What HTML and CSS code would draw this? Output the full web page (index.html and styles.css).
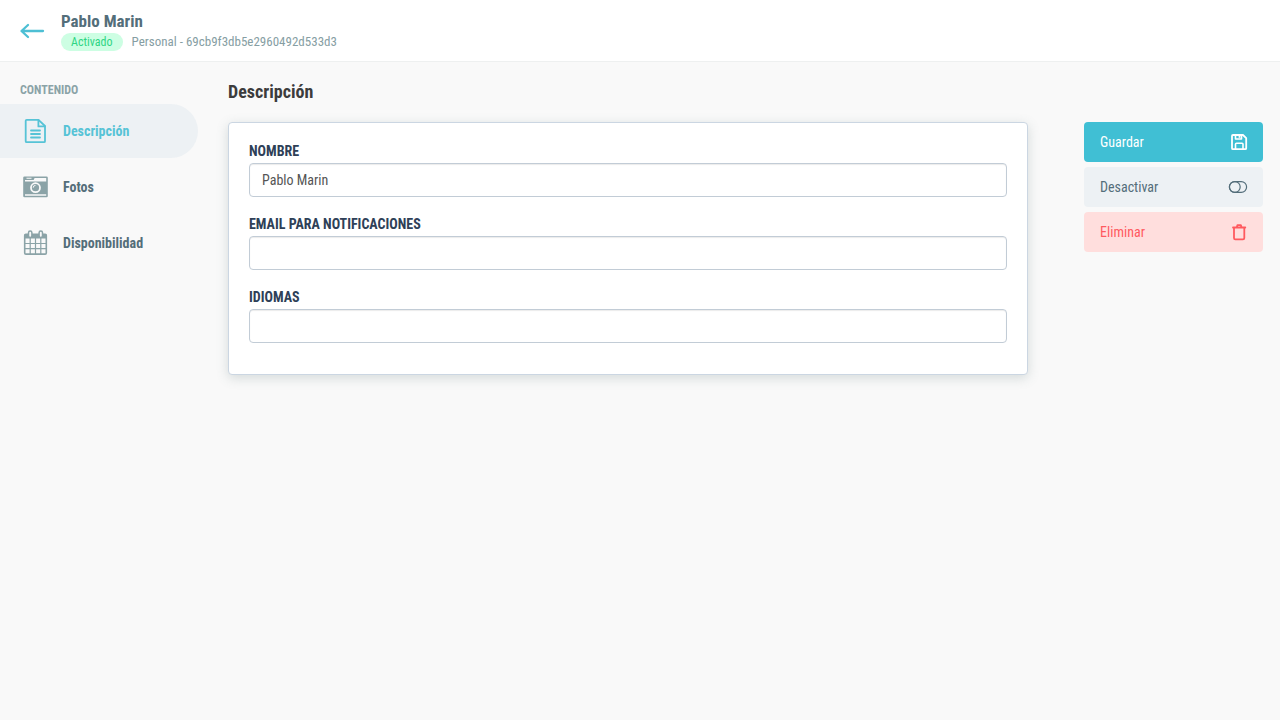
FILE: index.html
```html
<!DOCTYPE html>
<html lang="es">
<head>
    <meta charset="UTF-8">
    <meta name="viewport" content="width=device-width, initial-scale=1.0">
    <title>Pablo Marin - Descripción</title>
    <link rel="stylesheet" href="styles.css">
</head>
<body>
    <header class="topbar">
        <a href="#" class="back-link" aria-label="Volver">
            <svg width="26" height="18" viewBox="0 0 26 18" fill="none" stroke="currentColor" stroke-width="2.3" stroke-linecap="round" stroke-linejoin="round">
                <path d="M24 9H3M9 3L2.500 9L9 15"/>
            </svg>
        </a>
        <div class="profile">
            <h1>Pablo Marin</h1>
            <div class="profile-meta">
                <span class="badge">Activado</span>
                <span>Personal - 69cb9f3db5e2960492d533d3</span>
            </div>
        </div>
    </header>

    <div class="layout">
        <nav class="sidebar">
            <h2>Contenido</h2>
            <a href="#descripcion" class="nav-item active">
                <svg width="26" height="26" viewBox="0 0 26 26" fill="none" stroke="currentColor" stroke-width="1.8" stroke-linejoin="round" stroke-linecap="round">
                    <path d="M4.700 1.800H16.500L23 8V23.200a1 1 0 0 1-1 1H4.700a1 1 0 0 1-1-1V2.800a1 1 0 0 1 1-1Z"/>
                    <path d="M16.400 2V8.400H22.800M9 12.500H18M9 16H18M9 19.500H18"/>
                </svg>
                <span>Descripción</span>
            </a>
            <a href="#fotos" class="nav-item">
                <svg width="26" height="26" viewBox="0 0 26 26" fill="currentColor">
                    <path fill-rule="evenodd" d="M2.500 2.500H24.500a1.300 1.300 0 0 1 1.300 1.300V22a1.300 1.300 0 0 1-1.300 1.300H2.500A1.300 1.300 0 0 1 1.200 22V3.800A1.300 1.300 0 0 1 2.500 2.500ZM12.600 3.900L11.600 6H3V7.600H24.200V3.900ZM4.500 3.800V4.800H9.500V3.800ZM3 20.300V21.700H24.200V20.300Z"/>
                    <circle cx="13.500" cy="13.700" r="4.500" fill="none" stroke="#f9f9f9" stroke-width="1.800"/>
                    <path d="M11.200 13.700a2.300 2.300 0 0 1 2.300-2.300" fill="none" stroke="#f9f9f9" stroke-width="1"/>
                </svg>
                <span>Fotos</span>
            </a>
            <a href="#disponibilidad" class="nav-item">
                <svg width="26" height="26" viewBox="0 0 26 26" fill="none" stroke="currentColor">
                    <rect x="2.700" y="4.300" width="21.600" height="19.800" rx="1.200" stroke-width="1.600"/>
                    <path d="M2.500 4.300H24.500V8.500H2.500Z" fill="currentColor" stroke="none"/>
                    <path d="M8.200 8V24M13.500 8V24M18.800 8V24M3 13.500H24M3 18.700H24" stroke-width="1.200"/>
                    <rect x="6.500" y="1" width="3.400" height="6.400" rx="1.700" fill="#f9f9f9" stroke-width="1.500"/>
                    <rect x="17.100" y="1" width="3.400" height="6.400" rx="1.700" fill="#f9f9f9" stroke-width="1.500"/>
                </svg>
                <span>Disponibilidad</span>
            </a>
        </nav>

        <main class="content">
            <h2>Descripción</h2>
            <form id="profile-form" class="card">
                <div class="form-group">
                    <label for="name">Nombre</label>
                    <input type="text" id="name" name="name" value="Pablo Marin">
                </div>
                <div class="form-group">
                    <label for="email">Email para notificaciones</label>
                    <input type="email" id="email" name="email">
                </div>
                <div class="form-group">
                    <label for="languages">Idiomas</label>
                    <input type="text" id="languages" name="languages">
                </div>
            </form>
        </main>

        <aside class="actions">
            <button type="submit" form="profile-form" class="btn btn-save">
                <span>Guardar</span>
                <svg width="18" height="18" viewBox="0 0 18 18" fill="none" stroke="currentColor" stroke-width="1.800" stroke-linejoin="round">
                    <path d="M3 2H13L16.200 5.200V15.200a1 1 0 0 1-1 1H3a1 1 0 0 1-1-1V3a1 1 0 0 1 1-1Z"/>
                    <path d="M5.500 2V6H11.500V2M5.500 16V11.200a1 1 0 0 1 1-1H12a1 1 0 0 1 1 1V16" stroke-width="1.600"/>
                    <path d="M9.500 2V4.800" stroke-width="1.800"/>
                </svg>
            </button>
            <button type="button" class="btn btn-disable">
                <span>Desactivar</span>
                <svg width="20" height="18" viewBox="0 0 20 18" fill="none" stroke="currentColor" stroke-width="1.200">
                    <rect x="1.400" y="3.600" width="17.200" height="10.800" rx="5.400"/>
                    <circle cx="6.800" cy="9" r="5.400"/>
                </svg>
            </button>
            <button type="button" class="btn btn-delete">
                <span>Eliminar</span>
                <svg width="18" height="18" viewBox="0 0 18 18" fill="none" stroke="currentColor" stroke-width="1.800" stroke-linejoin="round" stroke-linecap="round">
                    <path d="M4 4.500V15a1.300 1.300 0 0 0 1.300 1.300H13a1.300 1.300 0 0 0 1.300-1.300V4.500M3 4.500H15.300M6.800 4.200L7.400 2.200H10.900L11.500 4.200"/>
                </svg>
            </button>
        </aside>
    </div>
</body>
</html>
```
FILE: styles.css
```css
* {
    margin: 0;
    padding: 0;
    box-sizing: border-box;
}

body {
    font-family: 'Roboto Condensed', 'Liberation Sans Narrow', Roboto, sans-serif;
    font-size: 14px;
    line-height: 20px;
    color: #546e7a;
    background: #f9f9f9;
    min-height: 100vh;
}

a {
    color: inherit;
    text-decoration: none;
}

svg {
    flex: none;
    display: block;
}

/* header */
.topbar {
    display: flex;
    align-items: center;
    gap: 16px;
    height: 62px;
    padding: 0 19px;
    background: #fff;
    border-bottom: 1px solid #eef0f0;
}

.back-link {
    color: #4dbfd4;
}

.profile h1 {
    margin-bottom: 2px;
    font-size: 17px;
    line-height: 20px;
}

.profile-meta {
    display: flex;
    align-items: center;
    gap: 9px;
    font-size: 13px;
    line-height: 18px;
    color: #869ea3;
}

.badge {
    padding: 0 10px;
    border-radius: 9px;
    font-size: 12px;
    color: #2fd583;
    background: #cdfee3;
}

/* page */
.layout {
    display: grid;
    grid-template-columns: 198px minmax(0, 1fr) 179px;
    padding: 18px 17px 40px 0;
}

.sidebar h2 {
    padding-left: 20px;
    margin-bottom: 4px;
    font-size: 12px;
    color: #8ba3a7;
    text-transform: uppercase;
}

.nav-item {
    display: flex;
    align-items: center;
    gap: 15px;
    height: 54px;
    margin-bottom: 2px;
    padding-left: 22px;
    border-radius: 0 27px 27px 0;
    font-weight: bold;
}

.nav-item svg {
    color: #8ba3a7;
}

.nav-item.active,
.nav-item.active svg {
    color: #56c3d6;
}

.nav-item.active {
    background: #edf1f4;
}

.content {
    margin: 0 56px 0 30px;
}

.content h2 {
    margin-bottom: 18px;
    font-size: 18px;
    line-height: 24px;
    color: #3c3c3c;
}

.card {
    padding: 18px 20px 31px;
    background: #fff;
    border: 1px solid #cbd6e2;
    border-radius: 4px;
    box-shadow: 0 3px 12px rgba(80, 110, 110, 0.22);
}

.form-group + .form-group {
    margin-top: 17px;
}

.form-group label {
    display: block;
    margin-bottom: 2px;
    font-weight: bold;
    color: #2e4057;
    text-transform: uppercase;
}

.form-group input {
    display: block;
    width: 100%;
    height: 34px;
    padding: 0 12px;
    border: 1px solid #c2ccd6;
    border-radius: 4px;
    font: inherit;
    color: #555;
    background: #fff;
    box-shadow: inset 0 1px 1px rgba(0, 0, 0, 0.08);
}

.form-group input:focus {
    outline: none;
    border-color: #40bfd4;
}

.actions {
    display: flex;
    flex-direction: column;
    gap: 5px;
    padding-top: 42px;
}

.btn {
    display: flex;
    align-items: center;
    justify-content: space-between;
    height: 40px;
    padding: 0 15px 0 16px;
    border: none;
    border-radius: 4px;
    font: inherit;
    cursor: pointer;
}

.btn-save {
    color: #fff;
    background: #40bfd4;
}

.btn-disable {
    color: #546e7a;
    background: #edf1f4;
}

.btn-delete {
    color: #ff5a5f;
    background: #ffdedd;
}
```
